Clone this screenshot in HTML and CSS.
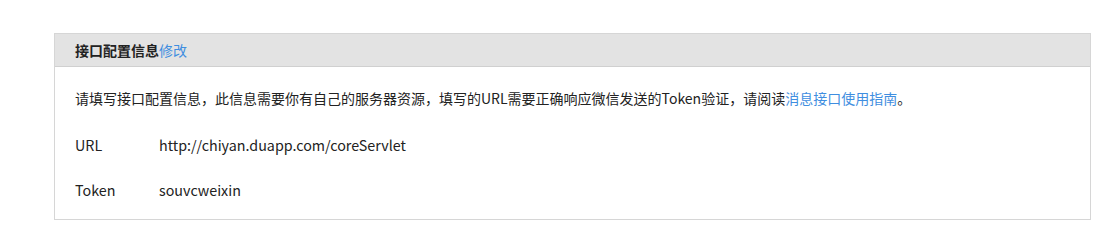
FILE: index.html
```html
<!DOCTYPE html>
<html lang="zh-CN">
<head>
<meta charset="utf-8">
<title>接口配置信息</title>
<link rel="stylesheet" href="styles.css">
</head>
<body>
<div class="panel">
  <div class="panel-head">
    <span class="title">接口配置信息</span><a class="link" href="#">修改</a>
  </div>
  <div class="panel-body">
    <p class="desc">请填写接口配置信息，此信息需要你有自己的服务器资源，填写的URL需要正确响应微信发送的Token验证，请阅读<a class="link" href="#">消息接口使用指南</a>。</p>
    <div class="row row-url">
      <span class="label">URL</span>
      <span class="value">http://chiyan.duapp.com/coreServlet</span>
    </div>
    <div class="row row-token">
      <span class="label">Token</span>
      <span class="value">souvcweixin</span>
    </div>
  </div>
</div>
</body>
</html>
```

FILE: styles.css
```css
html, body {
  margin: 0;
  background: #fff;
}
body {
  padding: 33px 27px 0 54px;
  font-family: "Noto Sans CJK SC", "Liberation Sans", sans-serif;
  font-size: 14px;
  color: #222;
}
.panel {
  border: 1px solid #d6d6d6;
  background: #fff;
}
.panel-head {
  height: 32px;
  line-height: 32px;
  background: #e3e3e3;
  border-bottom: 1px solid #d0d0d0;
  padding-left: 20px;
}
.title {
  font-weight: bold;
  color: #222;
}
.link {
  color: #3f8ee0;
  text-decoration: none;
}
.panel-body {
  padding: 21px 20px 19px 20px;
}
.desc {
  margin: 0;
  line-height: 20px;
}
.row {
  display: flex;
  line-height: 20px;
  font-size: 14.3px;
}
.row-url {
  margin-top: 27px;
}
.row-token {
  margin-top: 25px;
}
.label {
  width: 84px;
  flex: none;
}
```
